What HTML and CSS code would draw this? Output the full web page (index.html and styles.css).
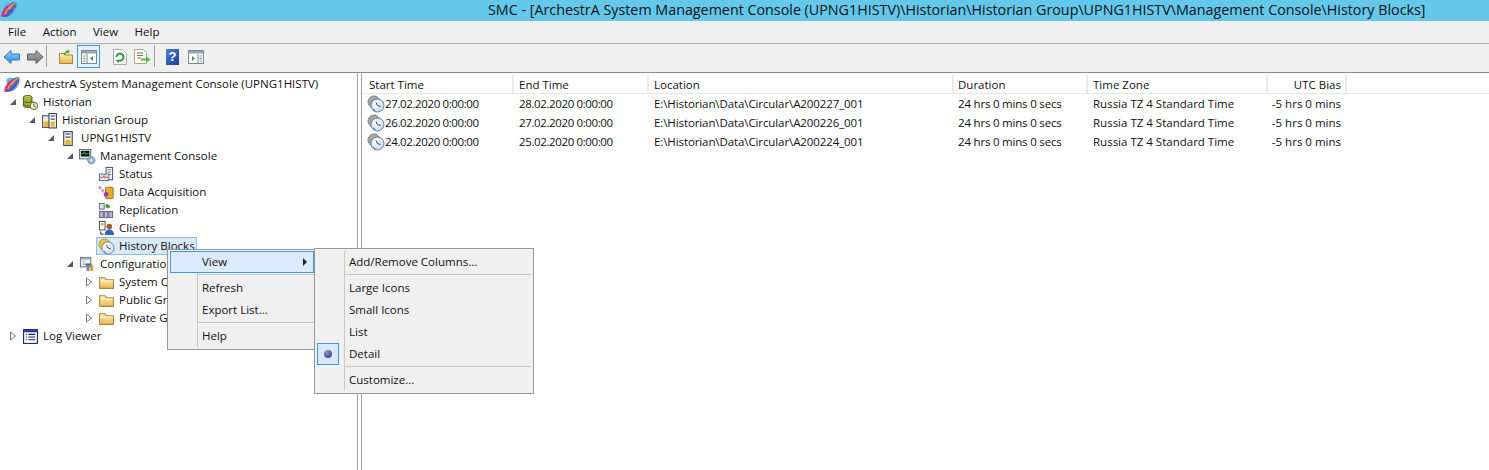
FILE: index.html
```html
<!DOCTYPE html>
<html lang="en">
<head>
<meta charset="utf-8">
<title>SMC</title>
<link rel="stylesheet" href="styles.css">
</head>
<body>
<svg class="defs" width="0" height="0" aria-hidden="true">
  <defs>
    <linearGradient id="gFolder" x1="0" y1="0" x2="0" y2="1"><stop offset="0" stop-color="#fdf0b8"/><stop offset="1" stop-color="#e8b94c"/></linearGradient>
    <linearGradient id="gArrow" x1="0" y1="0" x2="0" y2="1"><stop offset="0" stop-color="#9fdcff"/><stop offset="1" stop-color="#1f86d6"/></linearGradient>
    <linearGradient id="gGray" x1="0" y1="0" x2="0" y2="1"><stop offset="0" stop-color="#b5b5b5"/><stop offset="1" stop-color="#6f6f6f"/></linearGradient>
    <radialGradient id="gFace" cx=".4" cy=".35" r=".8"><stop offset="0" stop-color="#ffffff"/><stop offset="1" stop-color="#bcd0e6"/></radialGradient>
    <symbol id="logo" viewBox="0 0 18 18">
      <path d="M2 17C1 9 6 2 16 1c2 7-4 16-14 16z" fill="#3560cf"/>
      <path d="M9 15c3-1 5-4 6-8" fill="none" stroke="#7fa0e8" stroke-width="1.500"/>
      <ellipse cx="7" cy="5.500" rx="4.500" ry="3.800" fill="#52c3ee"/>
      <path d="M1.500 16.500C2 11 6 6 11 4" fill="none" stroke="#d92a8f" stroke-width="3"/>
      <path d="M4 14C6 9 10 5 15.500 2" fill="none" stroke="#f0a030" stroke-width="1.600"/>
      <path d="M6 15C8 10 11 7 16 4" fill="none" stroke="#e8483a" stroke-width="1"/>
    </symbol>
    <symbol id="clock" viewBox="0 0 18 18">
      <circle cx="7" cy="7" r="6" fill="#a5a5a5" stroke="#6c6c6c" stroke-dasharray="2 .5"/>
      <circle cx="10.500" cy="10.500" r="6.500" fill="url(#gFace)" stroke="#6d86a3"/>
      <path d="M9 7.500l1.500 3 3 1" fill="none" stroke="#2a3c55"/>
      <path d="M6 14l2.500 2.500" stroke="#5f95cf" stroke-width="1.500"/>
    </symbol>
    <symbol id="clockGold" viewBox="0 0 18 18">
      <circle cx="7" cy="7" r="6" fill="#f1c33c" stroke="#a67a12" stroke-dasharray="2 .5"/>
      <circle cx="10.500" cy="10.500" r="6.500" fill="url(#gFace)" stroke="#6d86a3"/>
      <path d="M9 7.500l1.500 3 3 1" fill="none" stroke="#2a3c55"/>
      <path d="M6 14l2.500 2.500" stroke="#5f95cf" stroke-width="1.500"/>
    </symbol>
    <symbol id="folder" viewBox="0 0 16 16">
      <path d="M1.500 13.500v-10h5l1.500 2h6.500v8z" fill="url(#gFolder)" stroke="#a9873a"/>
      <path d="M2 6.500h12" stroke="#fff7d4"/>
    </symbol>
    <symbol id="expanded" viewBox="0 0 8 10"><path d="M7 2v6H1z" fill="#595959"/></symbol>
    <symbol id="collapsed" viewBox="0 0 8 10"><path d="M1.500 1l5 4-5 4z" fill="#fff" stroke="#7a7a7a"/></symbol>
    <symbol id="historian" viewBox="0 0 18 18">
      <ellipse cx="6" cy="3.500" rx="4.500" ry="2" fill="#c9cf54" stroke="#4d5414"/>
      <path d="M1.500 3.500v9c0 1 2 2 4.500 2s4.500-1 4.500-2v-9" fill="#a9b23a" stroke="#4d5414"/>
      <path d="M1.500 7c0 1 2 2 4.500 2s4.500-1 4.500-2M1.500 10.500c0 1 2 2 4.500 2s4.500-1 4.500-2" fill="none" stroke="#4d5414"/>
      <circle cx="12.500" cy="12.500" r="4" fill="#f1f1d0" stroke="#555a20"/>
      <path d="M12.500 10v2.500l2 1" fill="none" stroke="#444a18"/>
    </symbol>
    <symbol id="group" viewBox="0 0 16 16">
      <rect x="1.500" y="3.500" width="7" height="11" fill="#e9edf2" stroke="#47566b"/>
      <rect x="2.500" y="9" width="5" height="5" fill="#e8b72f"/>
      <rect x="7.500" y="1.500" width="7" height="13.500" fill="#fff" stroke="#2f3d52"/>
      <rect x="9" y="3" width="4" height="1.500" fill="#6a7a8e"/><rect x="9" y="6" width="4" height="1.500" fill="#6a7a8e"/>
      <rect x="9" y="9" width="4" height="5" fill="#e8b72f"/>
    </symbol>
    <symbol id="server" viewBox="0 0 16 16">
      <rect x="3.500" y="1.500" width="8" height="13" fill="#f4f6f8" stroke="#2f3d52"/>
      <rect x="5" y="3" width="5" height="1.500" fill="#6a7a8e"/><rect x="5" y="6" width="5" height="1.500" fill="#6a7a8e"/>
      <rect x="5" y="9" width="5" height="5" fill="#e8b72f"/>
    </symbol>
    <symbol id="console" viewBox="0 0 18 18">
      <rect x=".5" y="1.500" width="12" height="10" fill="#dfe4ea" stroke="#5b6878"/>
      <rect x="2" y="3" width="9" height="6" fill="#111"/>
      <path d="M2.500 6h2l1-2 1.500 3 1-1h2" fill="none" stroke="#2fd13a"/>
      <circle cx="13" cy="13" r="3.800" fill="#9db7d6" stroke="#4d6d96" stroke-dasharray="1.500 .5"/>
      <circle cx="13" cy="13" r="1.200" fill="#eef3f9"/>
    </symbol>
    <symbol id="status" viewBox="0 0 18 18">
      <rect x="8.500" y="1.500" width="7" height="13" fill="#f7f8fa" stroke="#3a4a60"/>
      <path d="M10 4h4M10 6.500h4M10 9h4" stroke="#6b7a8e"/>
      <rect x="1.500" y="8.500" width="10" height="7" fill="#dfe8f3" stroke="#4a6a92"/>
      <path d="M2.500 12h3l1-2 1 3 1-1h2" fill="none" stroke="#d84a3a"/>
    </symbol>
    <symbol id="acquire" viewBox="0 0 18 18">
      <rect x="8" y="3.500" width="8" height="12" rx="1" fill="#e9ad2c" stroke="#9b6c12"/>
      <circle cx="8.500" cy="11" r="2.500" fill="#8a3fb5"/>
      <circle cx="2" cy="4" r="1.500" fill="#d86fd0"/><circle cx="5" cy="7" r="1.200" fill="#c05ac0"/>
      <path d="M2 4l5 6" stroke="#cf9fd0"/>
    </symbol>
    <symbol id="replication" viewBox="0 0 18 18">
      <rect x="1.500" y="1.500" width="5" height="6" fill="#dfe3ea" stroke="#5a6675"/>
      <path d="M8 2.500h3l2 2.500-2 2.500V6H8z" fill="#3a9a3c"/>
      <rect x="1.500" y="10" width="4" height="6.500" fill="#b9b6d8" stroke="#5e5a86"/>
      <rect x="6.500" y="10" width="4" height="6.500" fill="#b9b6d8" stroke="#5e5a86"/>
      <rect x="11.500" y="10" width="4" height="6.500" fill="#b9b6d8" stroke="#5e5a86"/>
    </symbol>
    <symbol id="clients" viewBox="0 0 18 18">
      <rect x="1.500" y="1.500" width="6" height="9" fill="#fff" stroke="#39475a"/>
      <rect x="3" y="3" width="3" height="3" fill="#e8b72f"/>
      <path d="M3 12v3h3" fill="none" stroke="#222"/>
      <circle cx="12" cy="7" r="3" fill="#a8592b"/>
      <path d="M7 16c0-4 2-6 5-6s5 2 5 6z" fill="#2f63b8"/>
    </symbol>
    <symbol id="config" viewBox="0 0 18 18">
      <rect x="1.500" y="1.500" width="11" height="10" fill="#f4f6f8" stroke="#5c6a7c"/>
      <rect x="2" y="2" width="10" height="2" fill="#aab4c2"/>
      <path d="M4 6h2M4 8.500h2" stroke="#6a7a8e"/>
      <rect x="8" y="8" width="3" height="8" fill="#6f88a8"/>
      <rect x="12" y="10" width="3" height="6" fill="#e0982c"/>
      <path d="M6.500 9h7" stroke="#4d6d96" stroke-width="2"/>
    </symbol>
    <symbol id="log" viewBox="0 0 16 16">
      <rect x="1.500" y="1.500" width="13" height="13" fill="#fff" stroke="#10206a"/>
      <rect x="2" y="2" width="12" height="2" fill="#1c2f9a"/>
      <path d="M3.500 6h1M3.500 8.500h1M3.500 11h1M6 6h6.500M6 8.500h6.500M6 11h6.500" stroke="#10206a"/>
    </symbol>
  </defs>
</svg>

<div class="window">
  <header class="titlebar">
    <svg class="title-logo"><use href="#logo"/></svg>
    <span class="title-text">SMC - [ArchestrA System Management Console (UPNG1HISTV)\Historian\Historian Group\UPNG1HISTV\Management Console\History Blocks]</span>
  </header>

  <nav class="menubar">
    <span class="menu-item">File</span>
    <span class="menu-item">Action</span>
    <span class="menu-item">View</span>
    <span class="menu-item">Help</span>
  </nav>

  <div class="toolbar">
    <button class="tool"><svg width="18" height="16" viewBox="0 0 18 16"><path d="M1 8l7-6.500V5h8.500v6H8v3.500z" fill="url(#gArrow)" stroke="#2a78bf"/></svg></button>
    <button class="tool"><svg width="18" height="16" viewBox="0 0 18 16"><path d="M17 8l-7-6.500V5H1.500v6H10v3.500z" fill="url(#gGray)" stroke="#5c5c5c"/></svg></button>
    <span class="tool-sep first-sep"></span>
    <button class="tool"><svg width="16" height="16" viewBox="0 0 16 16"><path d="M1.500 14.500v-10h5l1 1.500h7v8.500z" fill="url(#gFolder)" stroke="#a9873a"/><path d="M6 6c0-2 1-3.500 3-4l-.5-1.500L12 2l-2 3-.5-1.500C8 4 7.500 5 7.500 6z" fill="#4ea33a"/></svg></button>
    <button class="tool tool-active"><svg width="16" height="14" viewBox="0 0 16 14"><rect x=".5" y=".5" width="15" height="13" fill="#fff" stroke="#7b8794"/><rect x="1" y="1" width="14" height="2.500" fill="#9aa5b1"/><path d="M6 3.500v10" stroke="#7b8794"/><path d="M2 6h2.500M2 8.500h2.500M2 11h2.500" stroke="#7b8794"/><path d="M12 6v5L9 8.500z" fill="#3c9a3c"/></svg></button>
    <button class="tool tool-gap"><svg width="14" height="16" viewBox="0 0 14 16"><path d="M.5.500h9l4 4v11H.5z" fill="#fff" stroke="#a8a8a8"/><path d="M3.500 8a3.500 3.500 0 1 1 1.500 3" fill="none" stroke="#2f9a40" stroke-width="2"/><path d="M2 11h4v3z" fill="#2f9a40"/></svg></button>
    <button class="tool"><svg width="17" height="16" viewBox="0 0 17 16"><path d="M.5.500h9l3 3v11H.5z" fill="#fdfbe8" stroke="#a8a8a8"/><path d="M3 4h6M3 6.500h6M3 9h4" stroke="#777"/><path d="M7 9.500h5V7l4.500 3.500L12 14v-2.500H7z" fill="#58b848"/></svg></button>
    <span class="tool-sep second-sep"></span>
    <button class="tool"><span class="help-icon">?</span></button>
    <button class="tool"><svg width="16" height="14" viewBox="0 0 16 14"><rect x=".5" y=".5" width="15" height="13" fill="#fff" stroke="#7b8794"/><rect x="1" y="1" width="14" height="2.500" fill="#9aa5b1"/><path d="M10 3.500v10" stroke="#7b8794"/><path d="M11.500 6H14M11.500 8.500H14M11.500 11H14" stroke="#7b8794"/><path d="M4 6v5l3-2.500z" fill="#3c9a3c"/></svg></button>
  </div>

  <main class="panes">
    <section class="tree">
      <div class="node root"><svg class="ico"><use href="#logo"/></svg><span class="label">ArchestrA System Management Console (UPNG1HISTV)</span></div>
      <div class="node l0"><svg class="twisty"><use href="#expanded"/></svg><svg class="ico"><use href="#historian"/></svg><span class="label">Historian</span></div>
      <div class="node l1"><svg class="twisty"><use href="#expanded"/></svg><svg class="ico"><use href="#group"/></svg><span class="label">Historian Group</span></div>
      <div class="node l2"><svg class="twisty"><use href="#expanded"/></svg><svg class="ico"><use href="#server"/></svg><span class="label">UPNG1HISTV</span></div>
      <div class="node l3"><svg class="twisty"><use href="#expanded"/></svg><svg class="ico"><use href="#console"/></svg><span class="label">Management Console</span></div>
      <div class="node l4"><span class="twisty"></span><svg class="ico"><use href="#status"/></svg><span class="label">Status</span></div>
      <div class="node l4"><span class="twisty"></span><svg class="ico"><use href="#acquire"/></svg><span class="label">Data Acquisition</span></div>
      <div class="node l4"><span class="twisty"></span><svg class="ico"><use href="#replication"/></svg><span class="label">Replication</span></div>
      <div class="node l4"><span class="twisty"></span><svg class="ico"><use href="#clients"/></svg><span class="label">Clients</span></div>
      <div class="node l4"><span class="twisty"></span><span class="selected"><svg class="ico"><use href="#clockGold"/></svg><span class="label">History Blocks</span></span></div>
      <div class="node l3"><svg class="twisty"><use href="#expanded"/></svg><svg class="ico"><use href="#config"/></svg><span class="label">Configuration Editor</span></div>
      <div class="node l4"><svg class="twisty"><use href="#collapsed"/></svg><svg class="ico"><use href="#folder"/></svg><span class="label">System Configuration</span></div>
      <div class="node l4"><svg class="twisty"><use href="#collapsed"/></svg><svg class="ico"><use href="#folder"/></svg><span class="label">Public Groups</span></div>
      <div class="node l4"><svg class="twisty"><use href="#collapsed"/></svg><svg class="ico"><use href="#folder"/></svg><span class="label">Private Groups</span></div>
      <div class="node l0"><svg class="twisty"><use href="#collapsed"/></svg><svg class="ico"><use href="#log"/></svg><span class="label">Log Viewer</span></div>
    </section>

    <section class="list">
      <div class="list-row list-head">
        <span class="cell head-first">Start Time</span><span class="cell">End Time</span><span class="cell">Location</span><span class="cell dur-head">Duration</span><span class="cell">Time Zone</span><span class="cell num">UTC Bias</span>
      </div>
      <div class="list-row">
        <span class="cell first date"><svg class="row-ico"><use href="#clock"/></svg>27.02.2020 0:00:00</span><span class="cell date">28.02.2020 0:00:00</span><span class="cell path">E:\Historian\Data\Circular\A200227_001</span><span class="cell dur">24 hrs 0 mins 0 secs</span><span class="cell">Russia TZ 4 Standard Time</span><span class="cell num">-5 hrs 0 mins</span>
      </div>
      <div class="list-row">
        <span class="cell first date"><svg class="row-ico"><use href="#clock"/></svg>26.02.2020 0:00:00</span><span class="cell date">27.02.2020 0:00:00</span><span class="cell path">E:\Historian\Data\Circular\A200226_001</span><span class="cell dur">24 hrs 0 mins 0 secs</span><span class="cell">Russia TZ 4 Standard Time</span><span class="cell num">-5 hrs 0 mins</span>
      </div>
      <div class="list-row">
        <span class="cell first date"><svg class="row-ico"><use href="#clock"/></svg>24.02.2020 0:00:00</span><span class="cell date">25.02.2020 0:00:00</span><span class="cell path">E:\Historian\Data\Circular\A200224_001</span><span class="cell dur">24 hrs 0 mins 0 secs</span><span class="cell">Russia TZ 4 Standard Time</span><span class="cell num">-5 hrs 0 mins</span>
      </div>
    </section>
  </main>

  <div class="ctx ctx-main">
    <div class="ctx-item hot"><span>View</span><span class="chev"></span></div>
    <div class="ctx-rule"></div>
    <div class="ctx-item"><span>Refresh</span></div>
    <div class="ctx-item"><span>Export List...</span></div>
    <div class="ctx-rule"></div>
    <div class="ctx-item"><span>Help</span></div>
  </div>

  <div class="ctx ctx-sub">
    <div class="ctx-item"><span>Add/Remove Columns...</span></div>
    <div class="ctx-rule"></div>
    <div class="ctx-item"><span>Large Icons</span></div>
    <div class="ctx-item"><span>Small Icons</span></div>
    <div class="ctx-item"><span>List</span></div>
    <div class="ctx-item"><span class="radio"><span class="dot"></span></span><span>Detail</span></div>
    <div class="ctx-rule"></div>
    <div class="ctx-item"><span>Customize...</span></div>
  </div>
</div>
</body>
</html>
```

FILE: styles.css
```css
* { box-sizing: border-box; }
html, body { margin: 0; padding: 0; height: 100%; overflow: hidden; background: #fff; }
body { font: 11.5px/18px "Open Sans", "Noto Sans", sans-serif; color: #111; }
.defs { display: block; height: 0; }
.window { position: relative; height: 470px; display: flex; flex-direction: column; }

.titlebar { height: 21px; background: #63c8ea; display: flex; align-items: flex-start; padding-left: 1px; flex: none; }
.title-logo { width: 17px; height: 17px; margin-top: 1px; }
.title-text { margin-left: 470px; font-size: 14.3px; line-height: 19px; white-space: nowrap; color: #111; }

.menubar { height: 23px; background: #f0f0f0; border-bottom: 1px solid #b0b0b0; display: flex; align-items: center; padding-left: 1px; flex: none; }
.menu-item { padding: 0 7px; margin-right: 2.5px; }

.toolbar { height: 29px; background: #f0f0f0; border-bottom: 1px solid #8a8a8a; display: flex; align-items: flex-start; padding-top: 1px; flex: none; }
.tool { width: 23px; height: 23px; padding: 0; border: 1px solid transparent; background: none; display: flex; align-items: center; justify-content: center; }
.tool-active { background: #e5f1fb; border-color: #3c9ad8; }
.tool-gap { margin-left: 8px; }
.tool-sep { width: 1px; height: 22px; background: #a0a0a0; }
.first-sep { margin-right: 7px; }
.second-sep { margin-right: 6px; }
.help-icon { display: block; width: 13px; height: 16px; background: linear-gradient(135deg, #4f7fd8, #1f3a94); color: #fff; font: bold 13px/16px "Liberation Sans", sans-serif; text-align: center; }

.panes { flex: 1; display: flex; min-height: 0; }
.tree { width: 358px; flex: none; padding-top: 2px; padding-left: 4px; border-right: 1px solid #a0a0a0; overflow: hidden; }
.node { height: 18px; display: flex; align-items: center; white-space: nowrap; }
.twisty { width: 8px; height: 10px; flex: none; margin-right: 5px; }
.l0 { padding-left: 5px; }
.l1 { padding-left: 24px; }
.l2 { padding-left: 43px; }
.l3 { padding-left: 62px; }
.l4 { padding-left: 81px; }
.ico { width: 17px; height: 17px; flex: none; margin-right: 4px; }
.root .ico { margin-right: 3px; }
.label { display: block; }
.selected { display: flex; align-items: center; height: 18px; margin-left: -2px; padding: 0 1px; background: #d9e9f8; border: 1px solid #90bde8; }

.list { flex: 1; border-left: 1px solid #a0a0a0; margin-left: 3px; padding-top: 2px; min-width: 0; }
.list-row { display: grid; grid-template-columns: 152px 135px 305px 134px 180px 79px; height: 19px; align-items: center; white-space: nowrap; }
.list-head { border-bottom: 1px solid #e6e6e6; }
.list-head .cell { border-right: 2px solid #ebebeb; height: 18px; line-height: 20px; }
.cell { padding-left: 5px; display: block; }
.list-head .head-first { padding-left: 7px; }
.first { display: flex; align-items: center; padding-left: 5px; }
.row-ico { width: 18px; height: 18px; flex: none; }
.date { letter-spacing: -.38px; }
.path { letter-spacing: -.1px; }
.dur { letter-spacing: -.2px; margin-left: -1px; }
.list-head .dur-head { padding-left: 4px; }
.num { text-align: right; padding: 0 6px 0 0; }
.list-head .num { padding-right: 4px; }

.ctx { position: absolute; background: #f0f0f0; border: 1px solid #979797; }
.ctx-main { left: 167px; top: 249px; width: 148px; padding: 1px 0 2px 2px; }
.ctx-sub { left: 314px; top: 248px; width: 220px; padding: 2px 2px 2px; }
.ctx::before { content: ""; position: absolute; top: 2px; bottom: 2px; width: 1px; background: #c8c8c8; left: 29px; }
.ctx-item { position: relative; height: 22px; display: flex; align-items: center; padding-left: 32px; }
.ctx-rule { position: relative; height: 1px; background: #c8c8c8; margin: 1px 0 2px 27px; }
.hot { background: #dbeafc; outline: 1px solid #3c9ad8; outline-offset: -1px; }
.chev { position: absolute; right: 7px; top: 7px; border-left: 4px solid #222; border-top: 4px solid transparent; border-bottom: 4px solid transparent; }
.radio { position: absolute; left: 0; top: 0; width: 22px; height: 22px; background: #d9e9fb; border: 1px solid #3c9ad8; display: flex; align-items: center; justify-content: center; }
.dot { width: 8px; height: 8px; border-radius: 50%; background: radial-gradient(circle at 35% 30%, #8f93cf, #2c2f7a); }
```
